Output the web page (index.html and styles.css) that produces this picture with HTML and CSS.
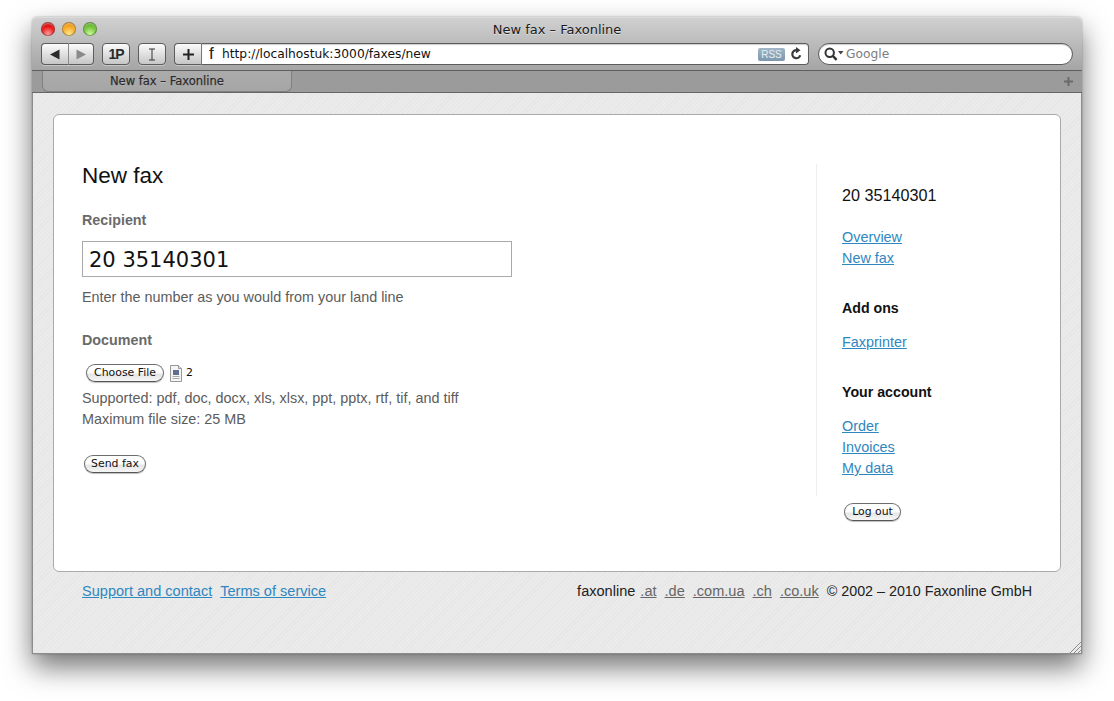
FILE: index.html
```html
<!DOCTYPE html>
<html lang="en">
<head>
<meta charset="utf-8">
<title>New fax – Faxonline</title>
<link rel="stylesheet" href="styles.css">
</head>
<body>
<div class="window">
  <header class="chrome">
    <div class="titlebar">
      <div class="lights">
        <span class="light red"></span><span class="light amber"></span><span class="light green"></span>
      </div>
      <div class="win-title">New fax – Faxonline</div>
    </div>
    <div class="toolbar">
      <div class="tool-group nav-group">
        <span class="tool tool-half">
          <svg width="12" height="11" viewBox="0 0 12 11"><path d="M1 5.500 10.500 .5v10z" fill="#2b2b2b"/></svg>
        </span>
        <span class="tool tool-half">
          <svg width="12" height="11" viewBox="0 0 12 11"><path d="M11 5.500 1.500 .5v10z" fill="#8a8a8a"/></svg>
        </span>
      </div>
      <span class="tool tool-btn onep">1P</span>
      <span class="tool tool-btn">
        <svg width="10" height="13" viewBox="0 0 10 13"><path d="M2 1h6M5 1v11M2 12h6" stroke="#333" stroke-width="1" fill="none"/></svg>
      </span>
      <div class="address">
        <span class="tool add-btn">
          <svg width="11" height="11" viewBox="0 0 11 11"><path d="M5.500 0v11M0 5.500h11" stroke="#222" stroke-width="2"/></svg>
        </span>
        <div class="url-field">
          <span class="favicon">f</span>
          <span class="url">http://localhostuk:3000/faxes/new</span>
          <span class="rss">RSS</span>
          <svg class="reload" width="13" height="14" viewBox="0 0 13 14"><path d="M10.200 8.200A4 4 0 1 1 6.500 3.200" fill="none" stroke="#3a3a3a" stroke-width="2.200"/><path d="M6 0 10.500 3.200 6 6.400z" fill="#3a3a3a"/></svg>
        </div>
      </div>
      <div class="search">
        <svg width="20" height="14" viewBox="0 0 20 14"><circle cx="5.700" cy="5.700" r="4.200" fill="none" stroke="#333" stroke-width="2"/><path d="M8.800 8.800 12.600 12.800" stroke="#333" stroke-width="2.400"/><path d="M14 4h5.500l-2.750 3.400z" fill="#444"/></svg>
        <span class="search-text">Google</span>
      </div>
    </div>
    <div class="tabbar">
      <div class="tab">New fax – Faxonline</div>
      <svg class="new-tab" width="9" height="9" viewBox="0 0 9 9"><path d="M4.500 0v9M0 4.500h9" stroke="#6a6a6a" stroke-width="2"/></svg>
    </div>
  </header>

  <div class="viewport">
    <div class="card">
      <main class="main">
        <h1 class="page-title">New fax</h1>
        <div class="label label-first">Recipient</div>
        <input class="number-input" type="text" value="20 35140301">
        <p class="hint">Enter the number as you would from your land line</p>
        <div class="label label-doc">Document</div>
        <div class="file-row">
          <span class="mac-btn choose-btn">Choose File</span>
          <svg class="file-icon" width="12" height="17" viewBox="0 0 12 17"><path d="M.5.5h8l3 3v13H.5z" fill="#f4f4f4" stroke="#999"/><path d="M8.500.5v3h3" fill="#ddd" stroke="#999"/><rect x="3" y="5" width="6" height="5" fill="#5d6f8c"/><path d="M2.500 11.500h7M2.500 13.500h7" stroke="#aaa"/></svg>
          <span class="file-name">2</span>
        </div>
        <p class="info">Supported: pdf, doc, docx, xls, xlsx, ppt, pptx, rtf, tif, and tiff</p>
        <p class="info">Maximum file size: 25 MB</p>
        <span class="mac-btn send-btn">Send fax</span>
      </main>
      <aside class="side">
        <nav class="side-nav">
          <div class="side-number">20 35140301</div>
          <ul class="links links-first">
            <li><a href="#">Overview</a></li>
            <li><a href="#">New fax</a></li>
          </ul>
          <div class="side-head">Add ons</div>
          <ul class="links">
            <li><a href="#">Faxprinter</a></li>
          </ul>
          <div class="side-head">Your account</div>
          <ul class="links">
            <li><a href="#">Order</a></li>
            <li><a href="#">Invoices</a></li>
            <li><a href="#">My data</a></li>
          </ul>
        </nav>
        <span class="mac-btn logout-btn">Log out</span>
      </aside>
    </div>
    <footer class="footer">
      <div class="foot-left">
        <a href="#">Support and contact</a>
        <a href="#">Terms of service</a>
      </div>
      <div class="foot-right">
        <span class="foot-brand">faxonline</span>
        <a href="#">.at</a>
        <a href="#">.de</a>
        <a href="#">.com.ua</a>
        <a href="#">.ch</a>
        <a href="#">.co.uk</a>
        <span class="foot-copy">© 2002 – 2010 Faxonline GmbH</span>
      </div>
    </footer>
    <svg class="grip" width="12" height="12" viewBox="0 0 12 12"><path d="M1 12 12 1M5 12 12 5M9 12 12 9" stroke="#8c8c8c" stroke-width="1" fill="none"/></svg>
  </div>
</div>
</body>
</html>
```
FILE: styles.css
```css
* { box-sizing: border-box; }
html, body { margin: 0; height: 100%; }
body {
  background: #fff;
  padding: 17px 32px 0 32px;
  font-family: "Liberation Sans", Arial, sans-serif;
  overflow: hidden;
}
.window {
  width: 1050px;
  height: 637px;
  display: flex;
  flex-direction: column;
  border-radius: 5px 5px 0 0;
  box-shadow: 0 13px 28px rgba(0,0,0,.55), 0 0 2px rgba(0,0,0,.35);
}
.chrome {
  height: 76px;
  flex: none;
  border-radius: 5px 5px 0 0;
  background: linear-gradient(#d0d0d0, #a4a4a4 53px);
  border-top: 1px solid #dadada;
  display: flex;
  flex-direction: column;
}
.titlebar {
  height: 25px;
  flex: none;
  display: flex;
  align-items: flex-start;
  padding: 4px 0 0 9px;
  position: relative;
}
.lights { display: flex; gap: 7px; }
.light {
  width: 14px;
  height: 14px;
  border-radius: 50%;
  box-shadow: inset 0 0 0 1px rgba(0,0,0,.3), inset 0 2px 2px rgba(255,255,255,.45);
}
.red { background: radial-gradient(circle at 50% 85%, #ffa0a0, #e81010 55%, #a00000); }
.amber { background: radial-gradient(circle at 50% 85%, #ffe890, #f5a015 60%, #c07000); }
.green { background: radial-gradient(circle at 50% 85%, #ccf8a0, #66bc2c 60%, #3f8415); }
.win-title {
  position: absolute;
  left: 0;
  right: 0;
  top: 3px;
  text-align: center;
  font: 13px/18px "DejaVu Sans", sans-serif;
  color: #1a1a1a;
  text-shadow: 0 1px 0 rgba(255,255,255,.5);
}
.toolbar {
  height: 22px;
  flex: none;
  display: flex;
  padding-left: 9px;
  gap: 8px;
}
.tool {
  display: flex;
  align-items: center;
  justify-content: center;
  height: 22px;
  border: 1px solid #5c5c5c;
  border-radius: 4px;
  background: linear-gradient(#fbfbfb, #c6c6c6);
  box-shadow: 0 1px 0 rgba(255,255,255,.35);
}
.tool-group { display: flex; }
.tool-half { width: 27px; }
.tool-half:first-child { border-radius: 4px 0 0 4px; border-right: 0; }
.tool-half:last-child { border-radius: 0 4px 4px 0; width: 26px; border-left-color: #8a8a8a; }
.tool-btn { width: 28px; }
.onep { font: bold 14px "Liberation Sans", sans-serif; color: #2b2b2b; letter-spacing: -1px; }
.address { display: flex; width: 635px; }
.add-btn { width: 27px; border-radius: 4px 0 0 4px; flex: none; border-right: 0; }
.url-field {
  flex: 1;
  height: 22px;
  background: #fff;
  border: 1px solid #5c5c5c;
  border-left: 1px solid #777;
  border-radius: 0 4px 4px 0;
  display: flex;
  align-items: center;
  padding-left: 7px;
  box-shadow: inset 0 1px 1px rgba(0,0,0,.2);
}
.favicon { font: 17px/18px "Liberation Sans", sans-serif; width: 13px; color: #222; }
.url { font: 12.25px/18px "DejaVu Sans", sans-serif; color: #111; flex: 1; }
.rss {
  width: 27px;
  height: 13px;
  background: linear-gradient(#a0b6c8, #7d97ad);
  color: #e6eef3;
  font: 10px/13px "Liberation Sans", sans-serif;
  text-align: center;
  border-radius: 2px;
}
.reload { margin: 0 5px 0 5px; }
.search {
  width: 255px;
  margin-left: 1px;
  height: 22px;
  border: 1px solid #5c5c5c;
  border-radius: 11px;
  background: #fff;
  display: flex;
  align-items: center;
  padding-left: 5px;
  gap: 2px;
  box-shadow: inset 0 1px 1px rgba(0,0,0,.2);
}
.search-text { font: 12.25px/18px "DejaVu Sans", sans-serif; color: #7d7d7d; }
.tabbar {
  height: 23px;
  margin-top: 5px;
  flex: none;
  display: flex;
  align-items: flex-start;
  justify-content: space-between;
  padding: 0 9px 0 10px;
  background: #9b9b9b;
  border-top: 1px solid #5f5f5f;
  border-bottom: 1px solid #666;
}
.tab {
  width: 250px;
  height: 21px;
  background: linear-gradient(#ababab, #a6a6a6);
  border: 1px solid #808080;
  border-top: 0;
  border-radius: 0 0 6px 6px;
  padding-left: 67px;
  font: 11.5px/21px "DejaVu Sans", sans-serif;
  -webkit-text-stroke: .25px #2b2b2b;
  color: #2b2b2b;
  text-shadow: 0 1px 0 rgba(255,255,255,.25);
}
.new-tab { margin-top: 6px; }
.viewport {
  flex: 1;
  position: relative;
  padding: 21px 20px 0 20px;
  border: 1px solid #8c8c8c;
  border-top: 0;
  background: repeating-linear-gradient(135deg, #ebebeb 0 2px, #e6e6e6 2px 3px);
  display: flex;
  flex-direction: column;
}
.card {
  height: 458px;
  flex: none;
  background: #fff;
  border: 1px solid #aaa;
  border-radius: 6px;
  display: flex;
}
.main { width: 762px; padding: 47px 0 0 28px; flex: none; }
.page-title {
  margin: 0;
  font: 400 22.5px/28px "Liberation Sans", sans-serif;
  color: #111;
}
.label { font: bold 14.3px/18px "Liberation Sans", sans-serif; color: #6a6a6a; }
.label-first { margin-top: 21px; }
.label-doc { margin-top: 23px; }
.number-input {
  display: block;
  margin-top: 12px;
  width: 430px;
  height: 36px;
  border: 1px solid #a9a9a9;
  border-radius: 0;
  padding: 2px 6px 0;
  font: 21px "DejaVu Sans", sans-serif;
  color: #111;
  background: #fff;
}
.hint { margin: 10px 0 0; font-size: 14.4px; line-height: 21px; color: #5c5c5c; }
.file-row { display: flex; align-items: center; margin-top: 14px; height: 20px; padding-left: 4px; }
.mac-btn {
  display: inline-flex;
  align-items: center;
  justify-content: center;
  height: 18px;
  border: 1px solid #6d6d6d;
  border-bottom-color: #555;
  border-radius: 9px;
  background: linear-gradient(#fff 45%, #e6e6e6 60%, #f6f6f6);
  box-shadow: 0 1px 1px rgba(0,0,0,.25);
  font: 10.9px/16px "DejaVu Sans", sans-serif;
  color: #111;
}
.choose-btn { width: 78px; }
.file-icon { margin-left: 6px; }
.file-name { margin-left: 4px; font: 10.9px/16px "DejaVu Sans", sans-serif; color: #111; }
.info { margin: 0; font-size: 14.4px; line-height: 21px; color: #5c5c5c; }
.file-row + .info { margin-top: 5px; }
.send-btn { width: 62px; margin: 25px 0 0 2px; }
.side { flex: 1; padding-top: 49px; }
.side-nav {
  height: 332px;
  border-left: 1px solid #eee;
  padding: 20px 0 0 25px;
}
.side-number { font-size: 16.2px; line-height: 22px; color: #111; }
.side-head { margin-top: 29px; font: bold 14.2px/21px "Liberation Sans", sans-serif; color: #111; }
.links { list-style: none; margin: 13px 0 0; padding: 0; font-size: 14.4px; line-height: 21px; }
.links-first { margin-top: 21px; }
a { color: #2f87c0; }
.logout-btn { width: 57px; margin: 7px 0 0 28px; }
.footer {
  display: flex;
  justify-content: space-between;
  padding: 10px 29px 0 29px;
  font-size: 14.55px;
  line-height: 19px;
  color: #222;
}
.foot-left { display: flex; gap: 8px; }
.foot-right { display: flex; gap: 8px; }
.foot-brand { margin-right: -3px; }
.foot-copy { font-size: 14.3px; }
.foot-right a { color: #666; }
.grip { position: absolute; right: 0; bottom: 0; }
```
